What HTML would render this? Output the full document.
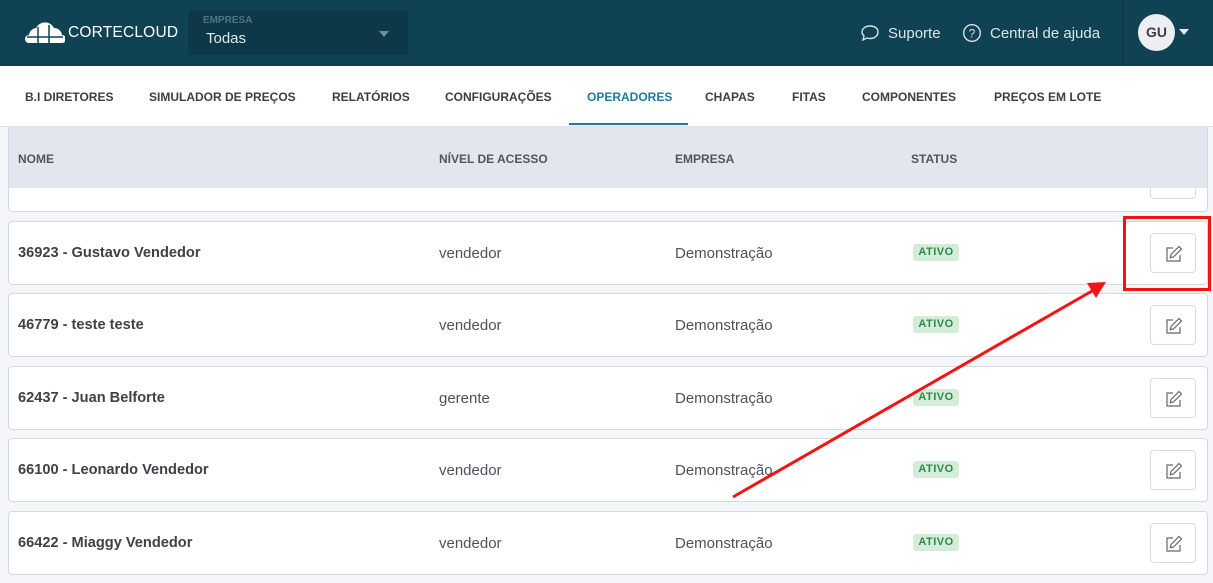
<!DOCTYPE html>
<html><head><meta charset="utf-8"><style>
*{box-sizing:border-box;margin:0;padding:0}
body{width:1213px;height:583px;overflow:hidden;background:#f4f6fa;font-family:"Liberation Sans",sans-serif;position:relative}
.top{position:absolute;left:0;top:0;width:1213px;height:66px;background:#0f4253}
.nav{position:absolute;left:0;top:66px;width:1213px;height:61px;background:#fff;border-bottom:1px solid #dde2ea}
.nav span{position:absolute;top:24px;font-size:12px;font-weight:bold;color:#3a3f47}
.th{position:absolute;left:8px;top:127px;width:1200px;height:61px;background:#e2e6ee;border-left:1px solid #d2d8e2;border-right:1px solid #d2d8e2}
.th span{position:absolute;top:25px;font-size:12px;font-weight:bold;color:#505660}
.card{position:absolute;left:8px;width:1200px;height:64px;background:#fff;border:1px solid #d3d9e2;border-radius:4px}
.card .n{position:absolute;left:9px;top:23px;font-size:14.6px;font-weight:bold;color:#3d4148}
.card .t{position:absolute;top:23px;font-size:15px;color:#4d5259}
.badge{position:absolute;left:904px;top:22px;width:46px;height:17px;background:#d5ecd9;border-radius:3px;color:#2a8a48;font-size:11px;font-weight:bold;text-align:center;line-height:17px;letter-spacing:.5px}
.btn{position:absolute;left:1141px;top:11px;width:46px;height:40px;border:1px solid #d6dbe3;border-radius:4px;background:#fff}
.btn svg{position:absolute;left:14px;top:11px}
</style></head><body>
<div class="top">
<svg style="position:absolute;left:25px;top:22px" width="40" height="22" viewBox="0 0 40 22"><path d="M4 21a4 4 0 0 1 0-8a8 8 0 0 1 7-7a10 10 0 0 1 18 0a8 8 0 0 1 8 7a4 4 0 0 1 0 8z" fill="#fff"/><path d="M13 5v17M24 3v19M2 15h36" stroke="#0f4253" stroke-width="1.5"/></svg>
<div style="position:absolute;left:68px;top:24px;color:#fff;font-size:15.5px;letter-spacing:.2px">CORTECLOUD</div>
<div style="position:absolute;left:188px;top:11px;width:220px;height:44px;background:#0c3847;border-radius:3px">
<div style="position:absolute;left:15px;top:4px;font-size:10px;font-weight:bold;color:#4f7380">EMPRESA</div>
<div style="position:absolute;left:18px;top:19px;font-size:15px;color:#dfe7ea">Todas</div>
<div style="position:absolute;left:191px;top:20px;border:5px solid transparent;border-top:6px solid #6e8c97"></div></div>
<svg style="position:absolute;left:860px;top:24px" width="20" height="18" viewBox="0 0 20 18"><path d="M10 2C5 2 2 5 2 8c0 2 1 3 2 4l-1 4 4-2c1 .4 2 .5 3 .5 5 0 8-3 8-6.5S15 2 10 2z" fill="none" stroke="#d7e2e6" stroke-width="1.4"/></svg>
<div style="position:absolute;left:888px;top:25px;font-size:15px;color:#dce6ea">Suporte</div>
<svg style="position:absolute;left:962px;top:23px" width="20" height="20" viewBox="0 0 20 20"><circle cx="10" cy="10" r="8.3" fill="none" stroke="#d7e2e6" stroke-width="1.4"/><text x="10" y="14.5" font-size="12" text-anchor="middle" fill="#d7e2e6" font-family="Liberation Sans">?</text></svg>
<div style="position:absolute;left:990px;top:25px;font-size:15px;color:#dce6ea">Central de ajuda</div>
<div style="position:absolute;left:1122px;top:0;width:1px;height:66px;background:#0a3342"></div>
<div style="position:absolute;left:1138px;top:14px;width:37px;height:37px;border-radius:50%;background:#eceef1;color:#3d4148;font-weight:bold;font-size:14px;text-align:center;line-height:37px">GU</div>
<div style="position:absolute;left:1179px;top:29px;border:5px solid transparent;border-top:6px solid #e6ecee"></div>
</div>
<div class="nav">
<span style="left:25px">B.I DIRETORES</span><span style="left:149px">SIMULADOR DE PREÇOS</span><span style="left:332px">RELATÓRIOS</span><span style="left:445px">CONFIGURAÇÕES</span><span style="left:587px;color:#217a9c">OPERADORES</span><span style="left:705px">CHAPAS</span><span style="left:792px">FITAS</span><span style="left:862px">COMPONENTES</span><span style="left:994px">PREÇOS EM LOTE</span>
<div style="position:absolute;left:569px;top:57px;width:119px;height:2px;background:#217a9c"></div>
</div>
<div style="position:absolute;left:8px;top:150px;width:1200px;height:62px;background:#fff;border:1px solid #d3d9e2;border-radius:4px"><div class="btn" style="top:8px"></div></div>
<div class="th"><span style="left:9px">NOME</span><span style="left:430px">NÍVEL DE ACESSO</span><span style="left:666px">EMPRESA</span><span style="left:902px">STATUS</span></div>

<div class="card" style="top:221px"><div class="n">36923 - Gustavo Vendedor</div><div class="t" style="left:430px">vendedor</div><div class="t" style="left:666px">Demonstração</div><div class="badge">ATIVO</div><div class="btn"><svg width="18" height="18" viewBox="0 0 18 18"><path d="M8 3H2v13h13v-6" fill="none" stroke="#666" stroke-width="1.2"/><path d="M14 1.5l2.5 2.5-8 8-3.2.7.7-3.2z" fill="none" stroke="#666" stroke-width="1.2"/></svg></div></div>
<div class="card" style="top:293px"><div class="n">46779 - teste teste</div><div class="t" style="left:430px">vendedor</div><div class="t" style="left:666px">Demonstração</div><div class="badge">ATIVO</div><div class="btn"><svg width="18" height="18" viewBox="0 0 18 18"><path d="M8 3H2v13h13v-6" fill="none" stroke="#666" stroke-width="1.2"/><path d="M14 1.5l2.5 2.5-8 8-3.2.7.7-3.2z" fill="none" stroke="#666" stroke-width="1.2"/></svg></div></div>
<div class="card" style="top:366px"><div class="n">62437 - Juan Belforte</div><div class="t" style="left:430px">gerente</div><div class="t" style="left:666px">Demonstração</div><div class="badge">ATIVO</div><div class="btn"><svg width="18" height="18" viewBox="0 0 18 18"><path d="M8 3H2v13h13v-6" fill="none" stroke="#666" stroke-width="1.2"/><path d="M14 1.5l2.5 2.5-8 8-3.2.7.7-3.2z" fill="none" stroke="#666" stroke-width="1.2"/></svg></div></div>
<div class="card" style="top:438px"><div class="n">66100 - Leonardo Vendedor</div><div class="t" style="left:430px">vendedor</div><div class="t" style="left:666px">Demonstração</div><div class="badge">ATIVO</div><div class="btn"><svg width="18" height="18" viewBox="0 0 18 18"><path d="M8 3H2v13h13v-6" fill="none" stroke="#666" stroke-width="1.2"/><path d="M14 1.5l2.5 2.5-8 8-3.2.7.7-3.2z" fill="none" stroke="#666" stroke-width="1.2"/></svg></div></div>
<div class="card" style="top:511px"><div class="n">66422 - Miaggy Vendedor</div><div class="t" style="left:430px">vendedor</div><div class="t" style="left:666px">Demonstração</div><div class="badge">ATIVO</div><div class="btn"><svg width="18" height="18" viewBox="0 0 18 18"><path d="M8 3H2v13h13v-6" fill="none" stroke="#666" stroke-width="1.2"/><path d="M14 1.5l2.5 2.5-8 8-3.2.7.7-3.2z" fill="none" stroke="#666" stroke-width="1.2"/></svg></div></div>

<div style="position:absolute;left:1123px;top:216px;width:88px;height:75px;border:3px solid #f01515"></div>
<svg style="position:absolute;left:0;top:0" width="1213" height="583"><line x1="733" y1="497" x2="1092" y2="291" stroke="#f01515" stroke-width="3"/><path d="M1106 282L1087 283L1096 298Z" fill="#f01515"/></svg>
</body></html>
